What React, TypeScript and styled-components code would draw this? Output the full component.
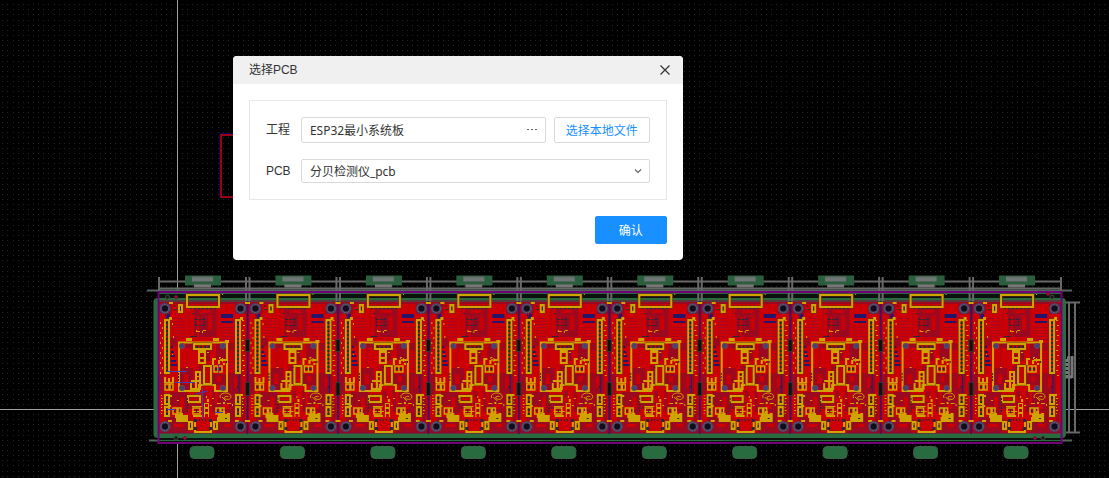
import React from 'react';
import styled, { createGlobalStyle } from 'styled-components';

const GlobalStyle = createGlobalStyle`
  * { box-sizing: border-box; }
  body { margin: 0; background: #000; }
  button, input, select { font: inherit; color: inherit; margin: 0; }
`;

const uiFont = '"Liberation Sans", "Noto Sans CJK SC", sans-serif';
const fieldFont = '"Noto Sans", "Noto Sans CJK SC", sans-serif';

const Workspace = styled.main`
  position: relative;
  min-height: 100vh;
  padding: 56px 16px 16px 21%;
  overflow: hidden;
  font: 12px/16px ${uiFont};
  color: #333;
`;

const Canvas = styled.svg`
  position: absolute;
  inset: 0;
  width: 100%;
  height: 100%;
`;

const Dialog = styled.section`
  position: relative;
  width: 450px;
  max-width: 100%;
  background: #fff;
  border-radius: 4px;
  overflow: hidden;
`;

const DialogHeader = styled.header`
  display: flex;
  align-items: center;
  justify-content: space-between;
  height: 28px;
  padding: 0 10px 0 16px;
  background: #f0f0f0;
`;

const Title = styled.h1`
  margin: 0;
  font: inherit;
`;

const IconButton = styled.button`
  display: grid;
  place-items: center;
  width: 16px;
  height: 16px;
  padding: 0;
  border: 0;
  background: none;
  cursor: pointer;
`;

const Form = styled.form`
  display: flex;
  flex-direction: column;
  gap: 16px;
  padding: 16px;
`;

const Panel = styled.div`
  display: flex;
  flex-direction: column;
  gap: 16px;
  padding: 16px;
  border: 1px solid #e6e6e6;
`;

const Row = styled.div`
  display: flex;
  align-items: center;
`;

const Label = styled.label`
  flex: 0 0 35px;
`;

const Field = styled.div<{ $height: number }>`
  display: flex;
  flex: 1;
  align-items: center;
  min-width: 0;
  height: ${(p) => p.$height}px;
  padding-right: 5px;
  border: 1px solid #d9d9d9;
  border-radius: 2px;
  background: #fff;
  font-family: ${fieldFont};
`;

const TextInput = styled.input`
  flex: 1;
  min-width: 0;
  height: 100%;
  padding: 0 0 0 8px;
  border: 0;
  outline: 0;
  background: none;
`;

const SelectField = styled(Field)`
  display: grid;
  grid-template-columns: 1fr 12px;
`;

const Select = styled.select`
  grid-column: 1 / 3;
  grid-row: 1;
  width: 100%;
  height: 100%;
  padding: 2px 16px 0 8px;
  border: 0;
  outline: 0;
  background: none;
  appearance: none;
`;

const Chevron = styled.svg`
  grid-column: 2;
  grid-row: 1;
  pointer-events: none;
`;

const Button = styled.button<{ $primary?: boolean }>`
  width: ${(p) => (p.$primary ? 72 : 96)}px;
  height: ${(p) => (p.$primary ? 28 : 26)}px;
  margin-left: 8px;
  padding: 2px 0 0;
  border: 1px solid ${(p) => (p.$primary ? '#1890ff' : '#d9d9d9')};
  border-radius: 2px;
  background: ${(p) => (p.$primary ? '#1890ff' : '#fff')};
  color: ${(p) => (p.$primary ? '#fff' : '#1890ff')};
  cursor: pointer;
`;

const Actions = styled.footer`
  display: flex;
  justify-content: flex-end;
`;

type Box = [number, number, number, number];

const GOLD = '#d0a400';
const PITCH = 90.45;
const boards = Array.from({ length: 10 }, (_, i) => i);

const series = (from: number, count: number, step: number) =>
  Array.from({ length: count }, (_, i) => from + i * step);

const boxPath = (items: Box[]) =>
  items.map(([x, y, w, h]) => `M${x} ${y}h${w}v${h}h${-w}z`).join('');

const Boxes = ({ items, fill }: { items: Box[]; fill: string }) => (
  <path fill={fill} d={boxPath(items)} />
);

const Frames = ({ items, stroke, width }: { items: Box[]; stroke: string; width: number }) => (
  <path fill="none" stroke={stroke} strokeWidth={width} d={boxPath(items)} />
);

const substrate: Box[] = [
  [194, 308, 22, 29], [158, 302, 89, 2], [158, 304, 14, 10], [235, 304, 12, 10],
  [179, 368, 14, 22], [186, 343, 8, 5], [216, 343, 11, 16], [212, 374, 14, 11],
  [198, 366, 5, 20], [206, 343, 4, 18], [227, 373, 15, 20], [229, 343, 5, 7],
  [170, 392, 17, 14], [179, 405, 8, 9], [188, 404, 13, 5], [212, 390, 22, 22],
  [165, 417, 24, 14], [218, 420, 22, 12], [229, 410, 6, 10], [158, 430, 89, 3],
  [202, 391, 4, 14], [159, 374, 5, 20], [242, 398, 3, 24], [171, 338, 6, 8],
];

const copper: Box[] = [
  [197, 316, 2, 22], [208, 315, 4, 15], [184, 374, 4, 10], [217, 376, 4, 6],
  [180, 397, 4, 12], [215, 392, 3, 13], [223, 404, 6, 5], [174, 424, 10, 3],
  [224, 424, 7, 3], [234, 377, 3, 11], [199, 310, 12, 3],
];

const traces: Box[] = [
  ...series(318, 7, 3).map((y): Box => [174, y, 12, 1]),
  ...series(327, 5, 3).map((y): Box => [219, y, 15, 1]),
  ...series(350, 7, 3).map((y): Box => [229, y, 5, 1]),
  [189, 310, 1, 28], [216, 310, 1, 28], [201, 310, 1, 6], [194, 316, 17, 1],
  [200, 346, 1, 42], [176, 394, 1, 20], [231, 372, 1, 40], [186, 348, 1, 20],
];

const blues: Box[] = [
  [221, 314, 12, 4], [221, 321, 12, 2], [167, 314, 3, 5], [171, 346, 2, 2],
  [171, 351, 3, 2], [171, 355, 4, 2], [171, 360, 5, 2], [171, 364, 6, 2],
];

const goldBoxes: Box[] = [
  [169, 302, 4, 2], [186, 338, 6, 3], [213, 338, 6, 3], [225, 340, 4, 3],
  [169, 317, 3, 3], [240, 317, 3, 3], [198, 350, 8, 3], [198, 353, 2, 11],
  [204, 353, 2, 11], [199, 357, 7, 2], [198, 362, 8, 2],
  [212, 358, 2, 7], [214, 358, 2, 2], [218, 360, 2, 4], [222, 359, 4, 2], [223, 363, 2, 2],
  [195, 371, 6, 2], [195, 371, 2, 12], [199, 371, 2, 19], [195, 376, 6, 1],
  [191, 380, 8, 2], [190, 383, 2, 7], [195, 383, 2, 7], [190, 388, 10, 2],
  [164, 377, 2, 5], [168, 378, 2, 4], [172, 377, 2, 5], [164, 382, 10, 1],
  [175, 414, 7, 4], [176, 417, 12, 5], [180, 413, 3, 4], [183, 415, 5, 3],
  [218, 414, 11, 4], [217, 417, 13, 5], [227, 413, 3, 5], [222, 411, 3, 3],
  [207, 399, 2, 3], [204, 403, 5, 1], [204, 403, 1, 14], [208, 403, 1, 14],
  [204, 407, 5, 2], [204, 412, 5, 2], [192, 406, 10, 1], [192, 411, 11, 1],
  [193, 415, 9, 2], [169, 395, 3, 2], [168, 405, 3, 2], [240, 394, 3, 2],
  [168, 420, 4, 2], [235, 420, 4, 2],
];

const goldFrames: Box[] = [
  [187, 295, 32, 12], [179, 305, 3, 7], [165, 320, 4, 53], [236, 320, 4, 53],
  [194, 344, 17, 5], [204, 366, 7, 18], [165, 395, 4, 9], [165, 407, 4, 9],
  [236, 395, 4, 9], [236, 407, 4, 9], [188, 396, 12, 6], [189, 422, 3, 7],
  [214, 422, 3, 7],
];

const fineFrames: Box[] = [
  [214, 366, 4, 6], [218, 366, 4, 6], [165, 384, 4, 6], [170, 384, 3, 6],
  [193, 408, 7, 6], [173, 408, 4, 6], [178, 408, 3, 5], [216, 408, 4, 6],
  [221, 408, 3, 6],
];

const silk: Box[] = [
  ...series(322, 11, 5).map((y, i): Box => [160 + (i % 2) * 2, y, 1, 2]),
  ...series(320, 12, 5).map((y, i): Box => [242 + (i % 2), y, 2, 1]),
  ...series(395, 7, 3).map((y, i): Box => [161, y, 1 + (i % 2), 1]),
  ...series(395, 7, 3).map((y, i): Box => [242, y, 1 + (i % 2), 1]),
  [172, 323, 1, 2], [173, 336, 1, 2], [172, 354, 1, 1], [222, 294, 1, 1],
  [197, 331, 3, 1], [196, 330, 1, 2], [202, 331, 1, 2], [203, 330, 3, 1],
  [217, 403, 4, 1], [223, 402, 2, 2], [227, 403, 4, 1], [219, 357, 2, 1],
  [210, 405, 2, 1], [206, 396, 1, 2], [212, 398, 2, 1], [177, 400, 2, 1],
  [232, 404, 1, 2], [207, 352, 2, 1], [186, 367, 2, 1],
];

const pads: Box[] = [
  ...series(322, 13, 4).flatMap((y): Box[] => [[166, y, 2, 2], [237, y, 2, 2]]),
  ...[386, 397, 401, 409, 413].flatMap((y): Box[] => [[166, y, 2, 2], [237, y, 2, 2]]),
  ...series(196, 4, 4).map((x): Box => [x, 346, 2, 2]),
  ...series(190, 7, 4).map((x): Box => [x, 308, 2, 1]),
  ...series(318, 3, 3).flatMap((y): Box[] => [[195, y, 1, 2], [204, y, 1, 2]]),
  ...series(196, 3, 3).flatMap((x): Box[] => [[x, 319, 2, 1], [x, 325, 2, 1]]),
  ...series(373, 3, 3).map((y): Box => [178, y, 1, 2]),
  ...series(398, 5, 3).map((y): Box => [187, y, 1, 2]),
  [194, 419, 3, 3], [209, 419, 3, 3], [194, 427, 3, 3], [209, 427, 3, 3],
  [199, 419, 1, 2], [202, 419, 1, 2], [205, 419, 1, 2], [192, 313, 2, 1],
  [174, 305, 1, 2], [174, 309, 3, 1], [201, 355, 2, 1], [201, 360, 2, 1],
  [215, 368, 2, 2], [219, 368, 2, 2], [197, 374, 2, 1], [193, 385, 1, 2],
  [180, 307, 1, 3], [190, 425, 1, 2], [215, 425, 1, 2], [196, 409, 1, 4],
  [190, 336, 7, 1], [174, 410, 1, 2], [217, 410, 1, 2], [206, 409, 1, 2],
  [171, 386, 1, 2], [202, 367, 1, 1], [225, 418, 2, 1], [226, 361, 1, 2],
];

const Hole = ({ x, y }: { x: number; y: number }) => (
  <>
    <circle cx={x} cy={y} r="5.6" fill="#493e60" />
    <circle cx={x} cy={y} r="4.2" fill="none" stroke="#696372" strokeDasharray="2 1" />
    <circle cx={x} cy={y} r="3" fill="#100e18" />
  </>
);

const Board = () => (
  <g>
    <rect x="158" y="302" width="89" height="131" fill="#cc0004" />
    <Boxes items={substrate} fill="#9b0921" />
    <Boxes items={copper} fill="#cc0004" />
    <path d="M187 433l15-16 15 16zM199 390l8 12h-12z" fill="#cc0004" />
    <Boxes items={traces} fill="#a9081c" />
    <path d="M159 301h87M159 433h87" stroke="#8b063c" fill="none" />
    <Boxes items={blues} fill="#22166c" />
    <path d="M165 313l3 8v52M239 374v19" stroke="#2b1a70" fill="none" />
    <path
      d="M179 342.5h48v48.500h-12v-6h-16v6h-20z"
      fill="none"
      stroke={GOLD}
      strokeWidth="2"
    />
    <Frames items={goldFrames} stroke="#6d2a10" width={3} />
    <Frames items={goldFrames} stroke={GOLD} width={2} />
    <Frames items={fineFrames} stroke={GOLD} width={1.5} />
    <Boxes items={goldBoxes} fill={GOLD} />
    <path d="M195 421v11h16v-11" fill="none" stroke={GOLD} strokeWidth="2" />
    <Boxes items={silk} fill={GOLD} />
    <Boxes items={pads} fill="#252838" />
    <path
      d="M219 358l4 4m0-4l-4 4M220.5 398c-2-3 2-5 5-5 5 0 7 4 4 6-2 1-6 0-5-2 1-1 4-1 4 0M222 397l4 4"
      fill="none"
      stroke={GOLD}
    />
    {[[182, 346], [223, 346], [182, 388], [223, 388]].map(([x, y]) => (
      <circle key={`${x}-${y}`} cx={x} cy={y} r="2.6" fill="#444177" stroke="#66495f" />
    ))}
    <Hole x={165} y={308.5} />
    <Hole x={240.5} y={308.5} />
    <Hole x={165} y={426.5} />
    <Hole x={240.5} y={426.5} />
    <rect x="190" y="446.5" width="24" height="12" rx="4" fill="#286b3f" stroke="#3d5d49" />
    <rect x="185" y="275.5" width="36" height="10" fill="#2a5e3d" />
    <path d="M192 279h21" stroke="#6f7774" strokeWidth="5" />
    <path d="M193 277h20M194 281.5h18" stroke="#565f5b" strokeDasharray="2 1" />
    <path d="M194 286h17" stroke="#777" strokeWidth="3" />
    <path d="M194 284.5h17" stroke="#666" strokeDasharray="2 1" />
  </g>
);

const Seam = () => (
  <g>
    <path d="M246 277v24M249.500 277v24" stroke="#696969" strokeWidth="2" />
    <rect x="246.500" y="301" width="2" height="133" fill="#3c1450" />
    <path d="M248.500 302v131" stroke="#76005c" />
    <path d="M245 303h5M245 421h5" stroke={GOLD} strokeWidth="2" />
    <rect x="245.5" y="339.5" width="4" height="12" fill="#111" stroke="#353535" />
    <rect x="245.5" y="382.5" width="4" height="13" fill="#111" stroke="#353535" />
  </g>
);

const PcbCanvas = () => (
  <Canvas aria-hidden="true">
    <defs>
      <pattern id="grid" x="13" y="20" width="41" height="41" patternUnits="userSpaceOnUse">
        {series(0, 8, 5).flatMap((y) =>
          series(0, 8, 5).map((x) => (
            <rect key={`${x}-${y}`} x={x} y={y} width="1" height="1" fill="#262626" />
          )),
        )}
      </pattern>
    </defs>
    <rect width="100%" height="100%" fill="url(#grid)" />
    <rect x="177" width="1" height="100%" fill="#a0a0a0" />
    <rect y="409" width="100%" height="1" fill="#a0a0a0" />
    <path d="M240 133.5H219.5V197" fill="none" stroke="#08005a" />
    <path d="M240 135H221V197H240" fill="none" stroke="#980016" strokeWidth="2" />

    <path d="M159 281.5h903M159 288.5h903" stroke="#686868" strokeWidth="2" />
    <path d="M147 290.5h925M149 440.5h923" stroke="#54645a" strokeWidth="2" />
    <path d="M159 277v15M1061 277v15" stroke="#696969" strokeWidth="2" />
    <path
      d="M1062 302.5h18M1062 432.5h18M1069 303v129M1075 303v129"
      stroke="#686868"
      strokeWidth="2"
    />
    <rect x="153.5" y="298" width="912.5" height="140" rx="4" fill="#286b3f" />
    <rect x="159" y="293" width="903" height="5" fill="#0c120e" />
    <rect x="159" y="438" width="903" height="4" fill="#0c120e" />
    <path d="M159 293.5h903M159 440.5h903" stroke="#286b3f" />
    <path
      d="M1067 358h5v19h-5zM1072 356v22"
      fill="none"
      stroke="#777"
      strokeWidth="3"
      strokeDasharray="3 1"
    />

    {boards.map((i) => (
      <g key={i} transform={`translate(${i * PITCH} 0)`}>
        <Board />
      </g>
    ))}
    {boards.slice(1).map((i) => (
      <g key={i} transform={`translate(${(i - 1) * PITCH} 0)`}>
        <Seam />
      </g>
    ))}
    <rect
      x="158.5"
      y="292"
      width="903"
      height="151"
      fill="none"
      stroke="#720078"
      strokeWidth="2"
    />
    {[[167.5, 297], [1052, 297], [176, 438], [1043, 438]].map(([x, y]) => (
      <circle key={x} cx={x} cy={y} r="2" fill="#171717" stroke="#444" />
    ))}
    {[[176, 297], [1048, 294], [185, 438], [1035, 438]].map(([x, y]) => (
      <circle key={x} cx={x} cy={y} r="1.5" fill="#ce0019" stroke="#5d1647" />
    ))}
    <path
      d="M167 371.5h20M175 382.5h20M195 394l13-3M202.5 388v31M218.5 364v9M167 409.5h8M215 412.5h8"
      fill="none"
      stroke="#4040b8"
    />
  </Canvas>
);

export default function App() {
  return (
    <>
      <GlobalStyle />
      <Workspace>
        <PcbCanvas />
        <Dialog role="dialog" aria-labelledby="dialog-title">
          <DialogHeader>
            <Title id="dialog-title">选择PCB</Title>
            <IconButton type="button" aria-label="关闭">
              <svg width="10" height="10" viewBox="0 0 10 10">
                <path d="M.5.5l9 9M9.5.5l-9 9" stroke="#333" strokeWidth="1.2" />
              </svg>
            </IconButton>
          </DialogHeader>
          <Form onSubmit={(e) => e.preventDefault()}>
            <Panel>
              <Row>
                <Label htmlFor="project">工程</Label>
                <Field $height={26}>
                  <TextInput id="project" defaultValue="ESP32最小系统板" />
                  <IconButton type="button" aria-label="浏览工程">
                    <svg width="10" height="2" viewBox="0 0 10 2">
                      <path d="M0 .5h2M4 .5h2M8 .5h2" stroke="#666" />
                    </svg>
                  </IconButton>
                </Field>
                <Button type="button">选择本地文件</Button>
              </Row>
              <Row>
                <Label htmlFor="pcb">PCB</Label>
                <SelectField $height={24}>
                  <Select id="pcb" defaultValue="pcb">
                    <option value="pcb">分贝检测仪_pcb</option>
                  </Select>
                  <Chevron width="12" height="10" viewBox="0 0 12 10">
                    <path d="M3 3.5l3 3 3-3" fill="none" stroke="#666" strokeWidth="1.2" />
                  </Chevron>
                </SelectField>
              </Row>
            </Panel>
            <Actions>
              <Button type="submit" $primary>确认</Button>
            </Actions>
          </Form>
        </Dialog>
      </Workspace>
    </>
  );
}
